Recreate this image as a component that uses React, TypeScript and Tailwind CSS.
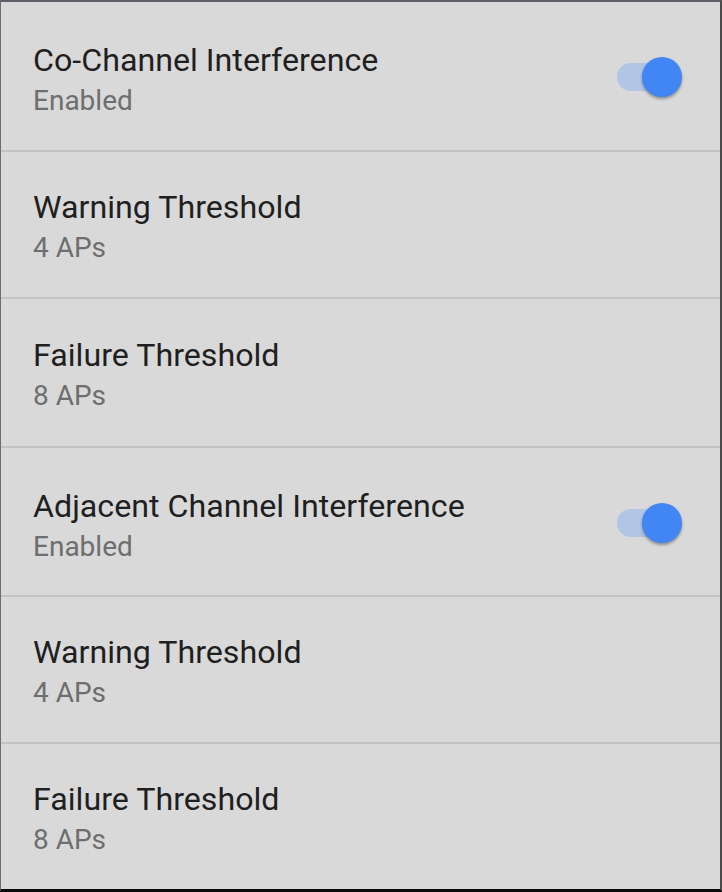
import React from "react";

type Row = { title: string; sub: string; toggle?: boolean; h: string; pt: string; last?: boolean };

const rows: Row[] = [
  { title: "Co-Channel Interference", sub: "Enabled", toggle: true, h: "h-[150px]", pt: "pt-[39px]" },
  { title: "Warning Threshold", sub: "4 APs", h: "h-[147px]", pt: "pt-[36px]" },
  { title: "Failure Threshold", sub: "8 APs", h: "h-[149px]", pt: "pt-[37px]" },
  { title: "Adjacent Channel Interference", sub: "Enabled", toggle: true, h: "h-[149px]", pt: "pt-[39px]" },
  { title: "Warning Threshold", sub: "4 APs", h: "h-[147px]", pt: "pt-[36px]" },
  { title: "Failure Threshold", sub: "8 APs", h: "h-[145px]", pt: "pt-[36px]", last: true },
];

function Toggle() {
  return (
    <div className="relative w-[65px] h-[40px]">
      <div className="absolute left-0 top-[6px] w-[58px] h-[28px] rounded-full bg-[#b1c5e7]" />
      <div className="absolute right-0 top-0 w-[40px] h-[40px] rounded-full bg-[#4285f4] shadow-[0_2px_3px_rgba(0,0,0,0.35)]" />
    </div>
  );
}

export default function App() {
  return (
    <div
      className="w-[722px] h-[892px] bg-[#d9d9d9] border-t-2 border-l border-r-2 border-b-[3px] border-t-[#5c5f66] border-l-[#6b6e74] border-r-[#4a4a4a] border-b-[#0a0a0a] overflow-hidden"
      style={{ fontFamily: "Roboto, 'Noto Sans', sans-serif" }}
    >
      {rows.map((r, i) => (
        <div
          key={i}
          className={`flex justify-between pl-[32px] pr-[38px] ${r.h} ${r.last ? "" : "border-b-2 border-[#c3c3c3]"}`}
        >
          <div className={r.pt}>
            <div className="text-[32.2px] leading-[38px] text-[#1f1f1f]">{r.title}</div>
            <div className="text-[28px] leading-[44px] text-[#6e6e6e]">{r.sub}</div>
          </div>
          {r.toggle && (
            <div className="self-center mt-[2px]">
              <Toggle />
            </div>
          )}
        </div>
      ))}
    </div>
  );
}
